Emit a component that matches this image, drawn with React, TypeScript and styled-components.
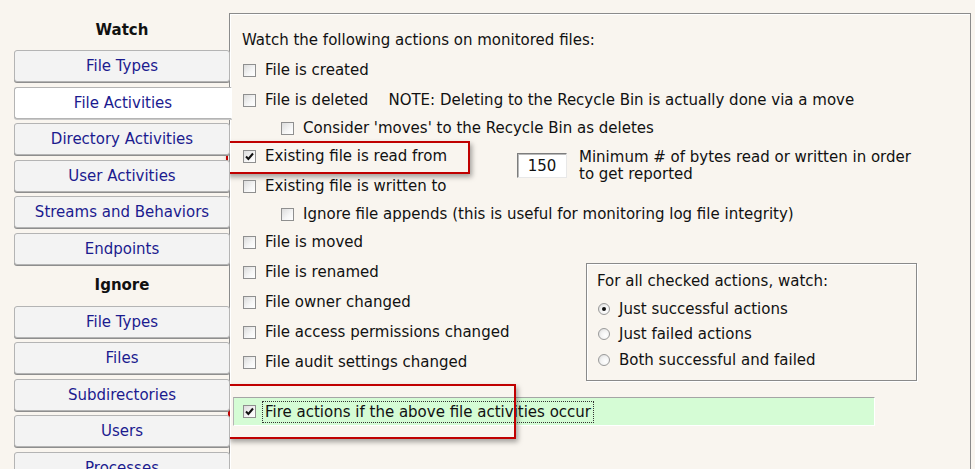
import React from "react";
import styled, { createGlobalStyle, css } from "styled-components";

const GlobalStyle = createGlobalStyle`
  html, body {
    margin: 0;
    padding: 0;
    overflow: hidden;
    background: #f9f5ef;
  }
  body {
    font-family: "DejaVu Sans", Verdana, sans-serif;
    font-size: 15px;
    color: #111;
  }
`;

const Page = styled.div`
  display: flex;
  align-items: flex-start;
  height: 469px;
`;

// ---- left navigation ----
const Sidebar = styled.nav`
  width: 216px;
  margin-left: 14px;
  padding-top: 13.5px;
  display: flex;
  flex-direction: column;
  gap: 4.5px;
  position: relative;
  z-index: 1;
`;

const NavTitle = styled.div`
  height: 32px;
  line-height: 32px;
  text-align: center;
  font-weight: bold;
  color: #111;
`;

const NavButton = styled.div<{ $active?: boolean }>`
  height: 32px;
  box-sizing: border-box;
  display: flex;
  align-items: center;
  justify-content: center;
  color: #1b1b8f;
  background: #f3f3f3;
  border: 1px solid #b4b4b4;
  border-radius: 3px;
  box-shadow: 0 1px 0 #8e8e8e;
  ${(p) =>
    p.$active &&
    css`
      background: #fff;
      border-right-color: #fff;
      border-radius: 3px 0 0 3px;
      margin-right: -2px;
      box-shadow: 0 1px 0 #c8c8c8;
    `}
`;

// ---- right panel ----
const Panel = styled.section`
  flex: 1;
  margin: 13px 4px 0 -1px;
  height: 480px;
  box-sizing: border-box;
  border: 1px solid #8b8b8b;
  border-bottom: none;
  box-shadow: inset 1px 1px 0 #fff;
  padding: 11px 0 0 12px;
  display: flex;
  flex-direction: column;
`;

const Heading = styled.div`
  height: 30px;
  line-height: 30px;
`;

const CheckRow = styled.div<{ $sub?: boolean }>`
  position: relative;
  display: flex;
  align-items: center;
  height: ${(p) => (p.$sub ? 26 : 30)}px;
  padding-left: ${(p) => (p.$sub ? 39 : 1)}px;
`;

const LabelCell = styled.div`
  display: flex;
  align-items: center;
  width: 274px;
  height: 100%;
`;

const Box = styled.span`
  flex: none;
  width: 13px;
  height: 13px;
  box-sizing: border-box;
  border: 1px solid #8f8f8f;
  background: linear-gradient(135deg, #dcdcdc 0%, #f6f6f6 60%, #fff 100%);
  display: inline-flex;
  align-items: center;
  justify-content: center;
`;

const Label = styled.span`
  margin-left: 9px;
  white-space: nowrap;
`;

const Note = styled.span`
  margin-left: 20px;
  white-space: nowrap;
`;

const Highlight = styled.span<{ $l: number; $t: number; $w: number; $h: number }>`
  position: absolute;
  left: ${(p) => p.$l}px;
  top: ${(p) => p.$t}px;
  width: ${(p) => p.$w}px;
  height: ${(p) => p.$h}px;
  box-sizing: border-box;
  border: 2px solid #c00000;
  box-shadow: 2px 3px 5px rgba(0, 0, 0, 0.35);
  pointer-events: none;
`;

const BytesGroup = styled.div`
  align-self: flex-start;
  margin-top: 7.5px;
  display: flex;
  align-items: center;
  gap: 12px;
`;

const NumberField = styled.div`
  width: 50px;
  height: 25px;
  box-sizing: border-box;
  background: #fff;
  border: 1px solid #e8e8e8;
  border-top-color: #7d7d7d;
  border-left-color: #7d7d7d;
  box-shadow: inset 1px 1px 0 #b9b9b9;
  display: flex;
  align-items: center;
  justify-content: center;
`;

const BytesText = styled.div`
  line-height: 17px;
`;

const Split = styled.div`
  display: flex;
  align-items: flex-start;
`;

const RowsColumn = styled.div`
  width: 344px;
  display: flex;
  flex-direction: column;
`;

const GroupBox = styled.div`
  margin-top: 36px;
  width: 331px;
  height: 118px;
  box-sizing: border-box;
  border: 1px solid #8a8a8a;
  box-shadow: 1px 1px 0 #fff, inset 1px 1px 0 #fff;
  padding: 7px 10px;
  display: flex;
  flex-direction: column;
`;

const GroupTitle = styled.div`
  height: 20px;
  line-height: 20px;
  margin-bottom: 5px;
`;

const RadioRow = styled.label`
  display: flex;
  align-items: center;
  height: 25.5px;
  padding-left: 1px;
`;

const RadioDot = styled.span<{ $on?: boolean }>`
  flex: none;
  width: 12px;
  height: 12px;
  box-sizing: border-box;
  border-radius: 50%;
  border: 1px solid #9a9a9a;
  background: radial-gradient(circle at 65% 65%, #fff 0%, #f2f2f2 50%, #d4d4d4 100%);
  display: inline-flex;
  align-items: center;
  justify-content: center;
  margin-right: 9px;
  &::after {
    content: "";
    width: 4px;
    height: 4px;
    border-radius: 50%;
    background: ${(p) => (p.$on ? "#111" : "transparent")};
  }
`;

const FireBar = styled.div`
  position: relative;
  margin: 16px 0 0 -9px;
  width: 642px;
  height: 29px;
  box-sizing: border-box;
  background: #d5fcd5;
  border-top: 1px solid #a5a5a5;
  border-left: 1px solid #b5b5b5;
  border-bottom: 1px solid #fff;
  border-right: 1px solid #fff;
  display: flex;
  align-items: center;
  padding-left: 9px;
`;

const FocusLabel = styled.span`
  margin-left: 6px;
  padding: 0 2px;
  line-height: 20px;
  border: 1px dotted #333;
  white-space: nowrap;
`;

const Check = ({ on }: { on?: boolean }) => (
  <Box>
    {on && (
      <svg width="9" height="9" viewBox="0 0 9 9">
        <path d="M1 4.5 L3.4 7 L8 1.5" fill="none" stroke="#111" strokeWidth="2" />
      </svg>
    )}
  </Box>
);

const watchItems = [
  "File Types",
  "File Activities",
  "Directory Activities",
  "User Activities",
  "Streams and Behaviors",
  "Endpoints",
];
const ignoreItems = ["File Types", "Files", "Subdirectories", "Users", "Processes"];

const leftRows = [
  "File is moved",
  "File is renamed",
  "File owner changed",
  "File access permissions changed",
  "File audit settings changed",
];

export default function App() {
  return (
    <Page>
      <GlobalStyle />
      <Sidebar>
        <NavTitle>Watch</NavTitle>
        {watchItems.map((t) => (
          <NavButton key={"w" + t} $active={t === "File Activities"}>
            {t}
          </NavButton>
        ))}
        <NavTitle>Ignore</NavTitle>
        {ignoreItems.map((t) => (
          <NavButton key={"i" + t}>{t}</NavButton>
        ))}
      </Sidebar>

      <Panel>
        <Heading>Watch the following actions on monitored files:</Heading>
        <CheckRow>
          <Check />
          <Label>File is created</Label>
        </CheckRow>
        <CheckRow>
          <Check />
          <Label>File is deleted</Label>
          <Note>NOTE: Deleting to the Recycle Bin is actually done via a move</Note>
        </CheckRow>
        <CheckRow $sub>
          <Check />
          <Label>Consider 'moves' to the Recycle Bin as deletes</Label>
        </CheckRow>
        <CheckRow>
          <Highlight $l={-16} $t={0} $w={244} $h={33} />
          <LabelCell>
            <Check on />
            <Label>Existing file is read from</Label>
          </LabelCell>
          <BytesGroup>
            <NumberField>150</NumberField>
            <BytesText>
              Minimum # of bytes read or written in order
              <br />
              to get reported
            </BytesText>
          </BytesGroup>
        </CheckRow>
        <CheckRow>
          <Check />
          <Label>Existing file is written to</Label>
        </CheckRow>
        <CheckRow $sub>
          <Check />
          <Label>Ignore file appends (this is useful for monitoring log file integrity)</Label>
        </CheckRow>

        <Split>
          <RowsColumn>
            {leftRows.map((t) => (
              <CheckRow key={t}>
                <Check />
                <Label>{t}</Label>
              </CheckRow>
            ))}
          </RowsColumn>
          <GroupBox>
            <GroupTitle>For all checked actions, watch:</GroupTitle>
            <RadioRow>
              <RadioDot $on />
              Just successful actions
            </RadioRow>
            <RadioRow>
              <RadioDot />
              Just failed actions
            </RadioRow>
            <RadioRow>
              <RadioDot />
              Both successful and failed
            </RadioRow>
          </GroupBox>
        </Split>

        <FireBar>
          <Highlight $l={-6} $t={-14} $w={288} $h={55} />
          <Check on />
          <FocusLabel>Fire actions if the above file activities occur</FocusLabel>
        </FireBar>
      </Panel>
    </Page>
  );
}
